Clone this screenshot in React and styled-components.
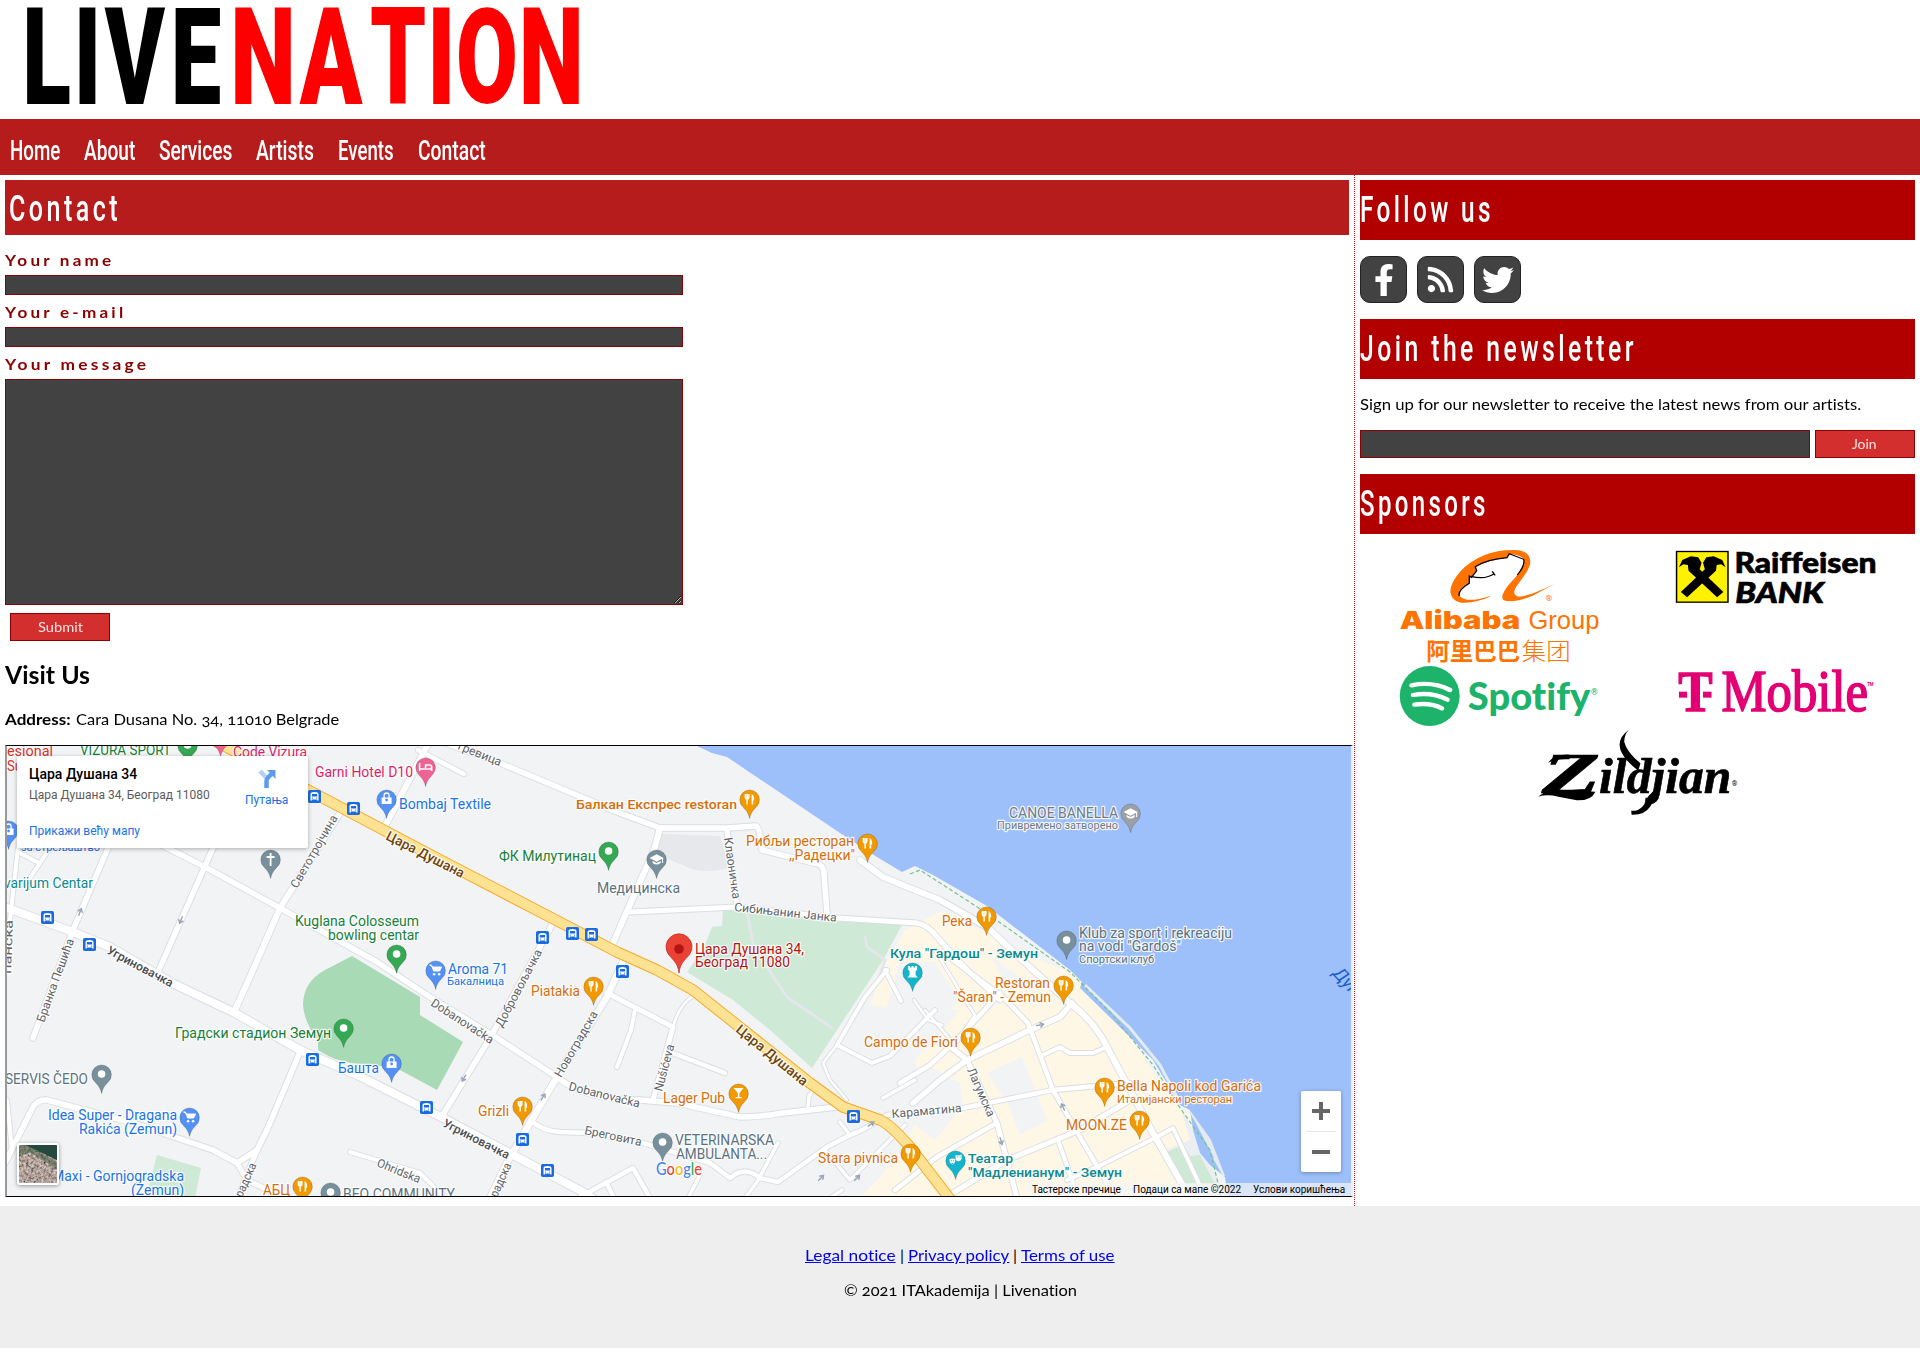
import React, { useLayoutEffect, useRef, useState } from "react";
import styled, { createGlobalStyle } from "styled-components";
import { FaFacebookF, FaRss, FaTwitter } from "react-icons/fa";

const Global = createGlobalStyle`
  * { box-sizing: border-box; }
  body { margin: 0; background: #fff; color: #000; font-family: Lato, "Open Sans", sans-serif; font-size: 16px; line-height: 20px; font-variant-ligatures: none; }
  h1, h2, h3, p { margin: 0; }
`;

/* Text squeezed or widened to a given set width */
const FitBox = styled.span`
  display: inline-block;
  white-space: nowrap;
  vertical-align: top;
  width: ${(p) => p.$w}px;
`;
const FitInner = styled.span`
  display: inline-block;
  transform-origin: 0 0;
  text-decoration: inherit;
`;
function Fit({ w, children }) {
  const ref = useRef(null);
  const [k, setK] = useState(1);
  useLayoutEffect(() => {
    setK(w / ref.current.offsetWidth);
  }, [w]);
  return (
    <FitBox $w={w}>
      <FitInner ref={ref} style={{ transform: `scaleX(${k})` }}>{children}</FitInner>
    </FitBox>
  );
}

const Header = styled.header`height: 119px;`;
const Nav = styled.nav`
  height: 56px;
  padding: 16px 0 0 10px;
  display: flex;
  gap: 24px;
  background: #b71c1c;
`;
const NavLink = styled.a`
  color: #fff;
  text-decoration: none;
  font: 500 27px/32px Roboto, sans-serif;
`;
const Columns = styled.div`display: flex; height: 1031px;`;
const Main = styled.main`width: 1354px; padding: 5px 0 0 5px;`;
const Aside = styled.aside`
  flex: 1;
  border-left: 1px dotted #b71c1c;
  padding: 5px 5px 0;
`;
const PageTitle = styled.h1`
  width: 1344px;
  height: 55px;
  padding: 8px 0 0 4px;
  background: #b71c1c;
  color: #fff;
  font: 500 36px/42px Roboto, sans-serif;
  letter-spacing: 5px;
`;
const SideTitle = styled.h2`
  height: 60px;
  padding-top: 9px;
  background: #b20000;
  color: #fff;
  font: 500 36px/42px Roboto, sans-serif;
  letter-spacing: 5px;
`;
const Form = styled.form`width: 678px; margin-top: 8px;`;
const Field = styled.label`
  display: block;
  padding-top: 7px;
  color: #8b0000;
  font-weight: 700;
  letter-spacing: 3px;
`;
const FieldName = styled.span`display: block; height: 25px;`;
const control = `
  display: block;
  width: 100%;
  margin: 0;
  padding: 1px 2px;
  background: #424242;
  border: 1px solid #8b0000;
  border-radius: 0;
  outline: 0;
`;
const Input = styled.input`${control} height: ${(p) => p.$h}px;`;
const TextArea = styled.textarea`${control} height: 226px;`;
const Button = styled.button`
  width: 100px;
  height: 28px;
  padding: 0 3px 0 0;
  margin: ${(p) => p.$m || "0"};
  display: block;
  flex: none;
  background: #d32f2f;
  border: 1px solid #8b0000;
  color: #fbe4e4;
  font: 400 13.33px/16px Lato, sans-serif;
`;
const Visit = styled.h3`margin-top: 20px; font-size: 24px; line-height: 28px; font-weight: 700;`;
const Address = styled.p`
  margin: 20px 0 16px;
  display: flex;
  gap: 5px;
  font-variant-numeric: oldstyle-nums;
`;

const Socials = styled.div`display: flex; gap: 10px; margin: 16px 0;`;
const Social = styled.a`
  width: 47px;
  height: 47px;
  border-radius: 10px;
  border: 1px solid #222;
  background: #424242;
  color: #fff;
  display: flex;
  align-items: center;
  justify-content: center;
  svg { width: ${(p) => p.$w}px; height: ${(p) => p.$h}px; }
`;
const Lead = styled.p`margin-top: 15px; height: 36px;`;
const Join = styled.div`display: flex; gap: 5px; margin-bottom: 16px;`;
const Sponsors = styled.div`
  display: flex;
  flex-wrap: wrap;
  justify-content: space-around;
  align-items: flex-start;
  row-gap: 4px;
  padding-top: 16px;
`;
const SponsorLogo = styled.svg`display: block; width: 200px; overflow: visible; margin-top: ${(p) => p.$t || 0}px;`;

const Footer = styled.footer`
  height: 142px;
  padding-top: 39px;
  background: #eee;
  display: flex;
  flex-direction: column;
  align-items: center;
  gap: 15px;
  font-variant-numeric: oldstyle-nums;
`;
const FooterLinks = styled.p`
  display: flex;
  gap: 4px;
  a { color: #0000ee; }
  a span span { text-decoration: underline; }
`;

/* ---------- Map ---------- */
const MapFrame = styled.div`
  position: relative;
  width: 1348px;
  height: 452px;
  border: solid;
  border-width: 1px 2px;
  border-color: #000 #eee #000 #999;
  overflow: hidden;
  font-family: Roboto, sans-serif;
`;
const MapSvg = styled.svg`display: block;`;
const InfoCard = styled.div`
  position: absolute;
  left: 10px;
  top: 10px;
  width: 291px;
  height: 92px;
  padding: 8px 20px 0 12px;
  display: flex;
  justify-content: space-between;
  background: #fff;
  border-radius: 2px;
  box-shadow: 0 1px 4px rgba(0, 0, 0, 0.3);
  font-size: 12px;
  line-height: 16px;
`;
const InfoTitle = styled.div`font-size: 14px; font-weight: 500; line-height: 20px; height: 23px;`;
const InfoText = styled.div`color: #5b5b5b; height: 36px;`;
const InfoLink = styled.div`color: #1a73e8;`;
const Route = styled.div`
  display: flex;
  flex-direction: column;
  align-items: center;
  padding-top: 5px;
  gap: 3px;
  color: #1a73e8;
`;
const Zoomer = styled.div`
  position: absolute;
  left: 1294px;
  top: 345px;
  width: 40px;
  height: 81px;
  background: #fff;
  border-radius: 2px;
  box-shadow: 0 1px 4px rgba(0, 0, 0, 0.3);
  display: grid;
  grid-template-rows: 40px 1px 40px;
  justify-items: center;
  align-items: center;
`;
const Rule = styled.div`width: 30px; height: 1px; background: #e6e6e6;`;
const Satellite = styled.div`
  position: absolute;
  left: 10px;
  top: 397px;
  width: 42px;
  height: 42px;
  border: 2px solid #fff;
  border-radius: 3px;
  box-shadow: 0 1px 4px rgba(0, 0, 0, 0.4);
  overflow: hidden;
  svg { display: block; }
`;
const Credits = styled.div`
  position: absolute;
  right: 0;
  bottom: 0;
  width: 324px;
  height: 13px;
  padding: 0 6px 0 5px;
  display: flex;
  justify-content: space-between;
  background: rgba(245, 245, 245, 0.7);
  font-size: 10px;
  line-height: 13px;
`;

const roads = [
  ["M7 908L13 910L73 932L110 947L172 983L235 1013L300 1050L357 1075L443 1118L517 1157L583 1192L592 1198", 8],
  ["M140 834L205 867L280 908L377 962L430 997L497 1038L557 1077Q585 1100 640 1100L677 1103L740 1117Q760 1117 783 1113L837 1107", 5.5],
  ["M213 848L158 972", 5.5],
  ["M340 813L280 908L253 970L235 1010", 6],
  ["M108 848L73 930L33 1038", 5.5],
  ["M427 746L383 830", 6],
  ["M418 750L464 774", 4.5],
  ["M440 741L500 763L617 812L660 828L727 828L756 826Q760 828 762 850L818 864Q824 866 824 874L827 913", 5.5],
  ["M660 828L654 850L613 943", 6],
  ["M630 912L737 907L837 918L917 923Q928 925 937 937L967 970L1000 1000", 5],
  ["M727 830L737 907", 5],
  ["M860 860L883 877L910 888L940 900L987 927L1033 970L1070 1003Q1095 1022 1107 1047L1153 1133L1187 1193", 6],
  ["M553 923L490 1038L450 1103L442 1116", 5.5],
  ["M625 957L607 997L557 1077L510 1157L490 1198", 6.5],
  ["M607 993L673 1027L653 1100", 5],
  ["M673 1027Q679 1005 693 996", 2.5],
  ["M635 1010L631 1030L617 1067", 4],
  ["M670 1052L725 1073", 4.5],
  ["M530 1120Q542 1131 560 1132L590 1133L643 1143L710 1163L730 1178Q745 1165 760 1178L778 1182L827 1147L850 1135Q865 1130 887 1115L963 1108L1053 1090L1130 1083", 4.5],
  ["M778 1143L757 1182L745 1198", 3.5],
  ["M580 1197L633 1168L650 1198M606 1182L614 1198", 4.5],
  ["M887 970L865 997L837 1045L872 1063L890 1056L935 1010", 4],
  ["M837 1045L823 1063L830 1080L847 1100", 2.5],
  ["M808 1108L809 1096L813 1090M840 1122L850 1135M825 1150L850 1180L905 1125M842 1190L830 1198", 3.5],
  ["M883 1098L915 1080M688 1198L700 1175", 3.5],
  ["M885 970L901 1001", 4],
  ["M913 1103L940 1080L967 1060L1030 1030L1060 1017L1072 1003", 5.5],
  ["M900 1083L930 1065L957 1040L1000 993", 4.5],
  ["M935 950L965 1000L975 1015L955 1045L925 1010M914 1000L928 1020L942 1025", 2.5],
  ["M953 960L1003 997L1028 1023L1053 1090L1080 1137L1107 1183", 4.5],
  ["M967 1060L997 1123L1017 1198M967 1060L948 1045", 5],
  ["M1043 1055L1060 1047L1070 1053L1093 1053L1107 1047", 4],
  ["M948 1196L1007 1160L1080 1130L1130 1100", 5],
  ["M1067 1180L1097 1167L1157 1137L1173 1128L1202 1190", 4],
  ["M1058 1140L1073 1183", 4],
  ["M895 1190L937 1157L993 1125", 4.5],
  ["M4 1165L33 1107Q38 1099 47 1100L133 1123L213 1150L237 1163L257 1150L267 1130L300 1052", 5.5],
  ["M237 1163L247 1180L280 1196M257 1150L238 1198", 5],
  ["M350 1152L420 1173L442 1195", 4],
  ["M18 848L10 920M20 853L37 862M50 848L30 878M7 1100L12 1150", 4],
];
const road = "M215 741L308 790L393 835L450 865L550 917L617 952L657 970L693 990L737 1025L810 1083L843 1107L880 1120Q890 1124 910 1147L950 1199";

const C = { or: "#d56e0c", gr: "#188038", bl: "#1a73e8", gy: "#5b7280", tl: "#0b8a8f", pk: "#e01e68", rd: "#d93025", st: "#5f6368" };
/* text, x, baseline, set width, colour, size, weight, angle */
const labels = [
  ["esional", 7, 756, 46, C.rd],
  ["Su", 7, 771, 15, C.rd],
  ["VIZURA SPORT", 80, 755, 91, C.gr],
  ["Code Vizura", 233, 757, 74, C.pk],
  ["Garni Hotel D10", 315, 777, 98, C.pk],
  ["Bombaj Textile", 399, 809, 92, C.bl],
  ["за стрељаштво", 21, 851, 79, C.bl, 11],
  ["varijum Centar", 4, 888, 89, C.tl],
  ["Светотројчина", 297, 889, 82, C.st, 12, 400, -60],
  ["Kuglana Colosseum", 295, 926, 124, C.gr],
  ["bowling centar", 328, 940, 91, C.gr],
  ["Угриновачка", 106, 953, 73, "#494c50", 12, 500, 28],
  ["Бранка Пешића", 44, 1023, 88, C.st, 12, 400, -70],
  ["панска", 11, 974, 54, C.st, 12, 400, -88],
  ["Цара Душана", 385, 839, 86, "#6d4410", 13.5, 500, 27],
  ["Градски стадион Земун", 175, 1038, 156, C.gr],
  ["Башта", 338, 1073, 41, C.bl],
  ["SERVIS ČEDO", 5, 1084, 83, C.gy],
  ["Idea Super - Dragana", 48, 1120, 129, C.bl],
  ["Rakića (Zemun)", 79, 1134, 98, C.bl],
  ["Maxi - Gornjogradska", 52, 1181, 132, C.bl],
  ["(Zemun)", 131, 1195, 53, C.bl],
  ["АБЦ", 263, 1195, 27, C.or],
  ["BEO COMMUNITY", 343, 1199, 112, C.gy],
  ["Ohridska", 376, 1166, 46, C.st, 12, 400, 22],
  ["радска", 242, 1198, 36, C.st, 12, 400, -66],
  ["гревица", 457, 749, 46, C.st, 12, 400, 22],
  ["Балкан Експрес restoran", 576, 809, 161, C.or, 13.5, 500],
  ["Рибљи ресторан", 746, 846, 108, C.or],
  [",,Радецки\"", 789, 860, 66, C.or],
  ["ФК Милутинац", 499, 861, 97, C.gr],
  ["Медицинска", 597, 893, 83, C.gy],
  ["Клаоничка", 724, 838, 62, C.st, 12, 400, 82],
  ["Сибињанин Јанка", 734, 911, 103, C.st, 12, 400, 6],
  ["Цара Душана 34,", 695, 954, 109, "#b31412"],
  ["Београд 11080", 695, 967, 95, "#b31412"],
  ["Кула \"Гардош\" - Земун", 890, 958, 148, C.tl, 13.5, 500],
  ["Aroma 71", 448, 974, 60, C.bl],
  ["Бакалница", 447, 985, 57, C.bl, 11],
  ["Piatakia", 531, 996, 49, C.or],
  ["Dobanovačka", 430, 1005, 72, C.st, 12, 400, 33],
  ["Dobanovačka", 568, 1090, 73, C.st, 12, 400, 14],
  ["Добровољачка", 502, 1028, 86, C.st, 12, 400, -62],
  ["Новоградска", 561, 1078, 74, C.st, 12, 400, -60],
  ["Nušićeva", 662, 1092, 48, C.st, 12, 400, -75],
  ["Lager Pub", 663, 1103, 62, C.or],
  ["Grizli", 478, 1116, 31, C.or],
  ["VETERINARSKA", 675, 1145, 99, C.gy],
  ["AMBULANTA...", 676, 1159, 91, C.gy],
  ["Бреговита", 584, 1134, 58, C.st, 12, 400, 12],
  ["Угриновачка", 442, 1126, 73, "#494c50", 12, 500, 27],
  ["радска", 497, 1198, 36, C.st, 12, 400, -66],
  ["Stara pivnica", 818, 1163, 80, C.or],
  ["Campo de Fiori", 864, 1047, 94, C.or],
  ["Цара Душана", 735, 1031, 88, "#6d4410", 13.5, 500, 39],
  ["Караматина", 892, 1118, 70, C.st, 12, 400, -5],
  ["CANOE BANELLA", 1009, 818, 109, "#707c86"],
  ["Привремено затворено", 997, 829, 121, "#707c86", 11],
  ["Река", 942, 926, 30, C.or],
  ["Klub za sport i rekreaciju", 1079, 938, 153, C.gy],
  ["na vodi \"Gardoš\"", 1079, 951, 102, C.gy],
  ["Спортски клуб", 1079, 963, 75, C.gy, 11],
  ["Restoran", 995, 988, 55, C.or],
  ["\"Šaran\" - Zemun", 953, 1002, 98, C.or],
  ["Лагумска", 967, 1070, 52, C.st, 12, 400, 66],
  ["Bella Napoli kod Garića", 1117, 1091, 144, C.or],
  ["Италијански ресторан", 1117, 1103, 115, C.or, 11],
  ["MOON.ZE", 1066, 1130, 61, C.or],
  ["Театар", 968, 1163, 45, C.tl, 13.5, 500],
  ["\"Мадленианум\" - Земун", 968, 1177, 154, C.tl, 13.5, 500],
];
const P = { or: "#f29900", gr: "#34a853", bl: "#5491f5", gy: "#78909c", tl: "#12b5cb", pk: "#f06292", sl: "#9aa0a6" };
const pins = [
  [187, 745, "gr", "dot"], [220, 737, "pk", "dot"], [425, 767, "pk", "bed"], [386, 799, "bl", "bag"], [8, 830, "bl", "bag"],
  [270, 859, "gy", "cross"], [396, 954, "gr", "dot"], [435, 970, "bl", "cart"], [343, 1028, "gr", "dot"], [391, 1063, "bl", "bag"],
  [101, 1074, "gy", "dot"], [189, 1117, "bl", "cart"], [302, 1186, "or", "food"], [330, 1192, "gy", "dot"], [749, 799, "or", "food"],
  [867, 843, "or", "food"], [608, 851, "gr", "dot"], [656, 859, "gy", "cap"], [593, 986, "or", "food"], [522, 1106, "or", "food"],
  [738, 1093, "or", "glass"], [662, 1142, "gy", "dot"], [910, 1153, "or", "food"], [1130, 813, "sl", "cap"], [986, 916, "or", "food"],
  [1066, 940, "gy", "dot"], [912, 972, "tl", "tower"], [1063, 985, "or", "food"], [970, 1037, "or", "food"], [1104, 1087, "or", "food"],
  [1139, 1120, "or", "food"], [955, 1160, "tl", "mask"],
];
const buses = [[314, 796], [353, 808], [47, 917], [89, 944], [312, 1059], [426, 1107], [542, 937], [572, 933], [591, 934], [622, 971], [522, 1139], [547, 1170], [853, 1116]];
const arrows = [[80, 912, -68], [181, 920, 112], [464, 1078, 120], [543, 1097, -58], [871, 1124, -35], [821, 1178, -45], [857, 1178, -45], [1040, 1025, -12], [1063, 1107, -115], [1001, 1141, 75]];

const glyphs = {
  dot: <circle r="3.8" fill="#fff" />,
  bed: <path d="M-6-4V4M-6 2H6M6 4V0Q6-2 4-2H0V1" stroke="#fff" strokeWidth="1.6" fill="none" />,
  bag: <><path d="M-5-1.5H5V5H-5Z" fill="#fff" /><path d="M-2.5-1V-3.5A2.5 2.5 0 0 1 2.5-3.5V-1" stroke="#fff" strokeWidth="1.3" fill="none" /><circle cy="1" r="1.4" fill="#5491f5" /></>,
  cart: <><path d="M-6-5H-4L-2 1H4L6-3H-3Z" fill="#fff" stroke="#fff" /><circle cx="-1.5" cy="4.3" r="1.3" fill="#fff" /><circle cx="3.5" cy="4.3" r="1.3" fill="#fff" /></>,
  cross: <path d="M0-6V7M-4-2H4" stroke="#fff" strokeWidth="1.8" />,
  food: <><path d="M-4.2-5V-1.5Q-4.2 0-2.5 0V5.5M-2.5-5V0M-.8-5V-1.5Q-.8 0-2.5 0" stroke="#fff" strokeWidth="1.5" fill="none" /><path d="M2 5.5V-5Q5-3.5 4.5 1.5H3.6V5.5Z" fill="#fff" /></>,
  glass: <path d="M-5-5H5L.8 0V4H3V5.2H-3V4H-.8V0Z" fill="#fff" />,
  cap: <><path d="M-7-1L0-4.8L7-1L0 2.8Z" fill="#fff" /><path d="M-4 2V4Q0 7 4 4V2L0 4Z" fill="#fff" /><path d="M6-1V4" stroke="#fff" /></>,
  tower: <path d="M-4.5-6H-2.5V-4.5H-1V-6H1V-4.5H2.5V-6H4.5V-2L3-1V3L5 5.5H-5L-3 3V-1L-4.5-2Z" fill="#fff" />,
  mask: <><path d="M-6-1Q-3-2-.5-1V2Q-3 7-6 2Z" fill="#fff" /><path d="M0-5Q3-4 6-5.5V-1Q4 3 0 0Z" fill="#fff" /><path d="M-4.8.8H-3.8M-2.5.8H-1.5M1.5-3H2.5M4-3H5M-4.3 3.5H-2.3" stroke="#12b5cb" /></>,
};
function Pin({ x, y, color, kind }) {
  return (
    <g transform={`translate(${x + 0.6} ${y})`}>
      <path d="M0 19.5C-1.5 13-4 11-7 7.6A9.8 9.8 0 1 1 7 7.6C4 11 1.5 13 0 19.5Z" fill={color} stroke="rgba(0,0,0,.22)" strokeWidth=".8" />
      {glyphs[kind]}
    </g>
  );
}
function Bus({ x, y }) {
  return (
    <g transform={`translate(${x + 0.5} ${y + 0.5})`}>
      <rect x="-6.5" y="-6.5" width="13" height="13" rx="1.8" fill="#1a6be0" />
      <path d="M-4 4V-2.5Q-4-4.5 0-4.5T4-2.5V4H2.6V3H-2.6V4Z" fill="#fff" />
      <path d="M-2.6-2.5H2.6V0H-2.6Z" fill="#1a6be0" />
      <path d="M-2.6 1.6h1M1.6 1.6h1" stroke="#1a6be0" />
    </g>
  );
}
const googleColors = ["#4285f4", "#ea4335", "#fbbc05", "#4285f4", "#34a853", "#ea4335"];

function CityMap() {
  return (
    <MapFrame>
      <MapSvg width="1344" height="450" viewBox="7 746 1344 450" fontFamily="Roboto, sans-serif">
        <rect x="7" y="746" width="1344" height="450" fill="#f1f3f5" />
        <path d="M943 910L985 932L1040 960L1070 972L1085 985L1130 1037L1165 1090L1180 1108L1190 1115L1197 1142L1185 1155L1195 1198H860L882 1175L905 1145L925 1100L915 1060L960 1010L900 1010L870 1005L885 965L905 930Z" fill="#fef7e6" />
        <path d="M900 962H935L960 1000L925 1035L895 1050L880 1030ZM987 1073L1022 1057L1047 1120L1020 1135L1008 1103ZM900 1085L933 1068L960 1083L963 1105L935 1140L905 1118ZM990 955L1030 985L1010 990Z" fill="#f1f3f5" />
        <path d="M723 910L902 925L883 960L812 1068L770 1030L733 1000L687 972L703 950L712 927L722 926Z" fill="#cfe9d7" />
        <path d="M352 956L325 970Q303 982 303 1005Q304 1022 318 1040V1050Q340 1065 370 1064L400 1070L437 1090L463 1042L420 1015V997Z" fill="#a8dab5" />
        <path d="M157 1155L201 1168L195 1198H146Z" fill="#cfe9d7" />
        <path d="M662 834L720 836L730 868Q700 875 685 866L652 853Z" fill="#e6e8ec" />
        <path d="M1180 1105L1193 1130L1210 1163L1228 1198H1185L1165 1150L1190 1140Z" fill="#eceff1" />
        <path d="M1167 1152L1183 1145L1208 1184H1183ZM1190 1156L1200 1155L1215 1184H1206Z" fill="#cfe9d7" />
        <path d="M697 746L712 753L727 757L840 833L877 857L902 872L915 866L933 875L987 906L1070 970L1082 982L1080 988L1130 1037L1153 1060L1180 1105L1190 1110L1193 1130L1200 1153L1210 1165L1225 1177L1228 1198H1351V746Z" fill="#9dc0fa" />
        <path d="M1085 985L1130 1028L1160 1065L1180 1103" stroke="#e4ebee" strokeWidth="3" fill="none" />
        <path d="M1190 1112L1210 1140L1224 1176L1214 1158" fill="#e4ebee" stroke="#e4ebee" strokeWidth="2" />
        <path d="M747 913L753 943L767 967L787 997L832 1028M865 937L867 947L885 960L880 975" stroke="#e4e7ea" strokeWidth="3" fill="none" strokeLinecap="round" />
        <g fill="none" strokeLinejoin="round" strokeLinecap="round">
          {roads.map(([d, w], i) => <path key={i} d={d} stroke="#dadde2" strokeWidth={w + 1.8} />)}
          {roads.map(([d, w], i) => <path key={i} d={d} stroke="#fff" strokeWidth={w} />)}
          <path d={road} stroke="#f2ab2c" strokeWidth="11.5" />
          <path d={road} stroke="#fde293" strokeWidth="9.5" />
          <path d="M910 874L920 870L985 912L1070 972L1110 1012L1153 1065L1178 1105L1210 1150L1221 1196" stroke="#71c38a" strokeWidth="1.2" strokeDasharray="4 2.5" strokeLinecap="butt" />
        </g>
        {arrows.map(([x, y, a], i) => (
          <path key={i} transform={`translate(${x} ${y}) rotate(${a})`} d="M-4 0H3M0-2.5L3.5 0L0 2.5" stroke="#9aa7b8" strokeWidth="1.5" fill="none" />
        ))}
        {buses.map(([x, y], i) => <Bus key={i} x={x} y={y} />)}
        {pins.map(([x, y, c, k], i) => <Pin key={i} x={x} y={y} color={P[c]} kind={k} />)}
        {labels.map(([t, x, y, w, c, size = 14, weight = 400, a = 0], i) => (
          <text key={i} transform={`translate(${x} ${y}) rotate(${a})`} textLength={w} lengthAdjust="spacingAndGlyphs" fill={c} fontSize={size} fontWeight={weight} stroke="#fff" strokeOpacity=".85" strokeWidth="2.4" strokeLinejoin="round" paintOrder="stroke">{t}</text>
        ))}
        <text transform="translate(1332 974) rotate(47)" fontSize="18" fontStyle="italic" fill="#1a5fd0">Дунав</text>
        <path d="M679 973C678 963 673 960 668.5 954.5A13 13 0 1 1 689.5 954.5C685 960 680 963 679 973Z" fill="#ea4335" stroke="#c5221f" strokeWidth=".7" />
        <circle cx="679" cy="949" r="4.8" fill="#b31412" />
        <text x="656" y="1175" fontSize="16.5" fontFamily="Lato, sans-serif" fontWeight="500" textLength="46" lengthAdjust="spacingAndGlyphs" stroke="#fff" strokeWidth="2" paintOrder="stroke">
          {"Google".split("").map((ch, i) => <tspan key={i} fill={googleColors[i]}>{ch}</tspan>)}
        </text>
      </MapSvg>
      <InfoCard>
        <div>
          <InfoTitle><Fit w={108}>Цара Душана 34</Fit></InfoTitle>
          <InfoText><Fit w={181}>Цара Душана 34, Београд 11080</Fit></InfoText>
          <InfoLink><Fit w={111}>Прикажи већу мапу</Fit></InfoLink>
        </div>
        <Route>
          <svg width="18" height="20" viewBox="0 0 18 20">
            <path d="M2 2L9 9.5" stroke="#b3d1f7" strokeWidth="4.5" />
            <path d="M8.5 19V12Q8.5 10 10 8.5L14 4.5" stroke="#5d9cec" strokeWidth="4.5" fill="none" />
            <path d="M9 1H17.5V10Z" fill="#5d9cec" />
          </svg>
          <Fit w={43}>Путања</Fit>
        </Route>
      </InfoCard>
      <Satellite>
        <svg width="38" height="38">
          <filter id="ground" x="0" y="0" width="100%" height="100%">
            <feTurbulence type="fractalNoise" baseFrequency=".4" numOctaves="3" seed="4" />
            <feColorMatrix values="1.1 0 0 0 -.12  .9 .2 0 0 -.2  .8 0 .2 0 -.18  0 0 0 0 1" />
          </filter>
          <rect width="38" height="38" filter="url(#ground)" />
          <path d="M6 0L38 15V0Z" fill="#24493f" />
          <path d="M0 0H8L38 17V24L12 8L0 10Z" fill="#3a5a3c" opacity=".5" />
        </svg>
      </Satellite>
      <Zoomer>
        <svg width="18" height="18"><path d="M0 9H18M9 0V18" stroke="#666" strokeWidth="4" /></svg>
        <Rule />
        <svg width="18" height="18"><path d="M0 9H18" stroke="#666" strokeWidth="4" /></svg>
      </Zoomer>
      <Credits>
        <Fit w={89}>Тастерске пречице</Fit>
        <Fit w={108}>Подаци са мапе ©2022</Fit>
        <Fit w={92}>Услови коришћења</Fit>
      </Credits>
    </MapFrame>
  );
}

/* ---------- Logos ---------- */
const brand = [
  ["L", 26.5, 45, "#000"], ["I", 78.5, 18.5, "#000"], ["V", 105, 61, "#000"], ["E", 175, 46, "#000"],
  ["N", 234.5, 56.5, "#f00"], ["A", 300, 63, "#f00"], ["T", 371.5, 53.5, "#f00"], ["I", 432, 19, "#f00"], ["O", 459, 56, "#f00"], ["N", 523, 56, "#f00"],
];
/* left bearing and ink width of each capital, in ems */
const ink = { L: [0.046, 0.5], I: [0.053, 0.2], V: [0.003, 0.67], E: [0.046, 0.51], N: [0.046, 0.605], A: [0.003, 0.685], T: [0.018, 0.6], O: [0.034, 0.625] };
function Brand() {
  return (
    <svg width="600" height="119" fontFamily="Roboto, sans-serif" fontWeight="900">
      {brand.map(([ch, x, w, fill], i) => {
        const size = ch === "O" ? 131 : 135;
        const y = ch === "O" ? 102.5 : 104;
        const k = w / (ink[ch][1] * size);
        return <text key={i} fontSize={size} transform={`translate(${x - ink[ch][0] * size * k} ${y}) scale(${k} 1)`} fill={fill}>{ch}</text>;
      })}
    </svg>
  );
}
const squeeze = { lengthAdjust: "spacingAndGlyphs" };

function Alibaba() {
  return (
    <SponsorLogo height="112" viewBox="160 60 540.6 336" preserveAspectRatio="none" fill="#ff7300">
      <path d="M410 197Q365 212 345 209Q318 203 323 185Q327 174 350 160V138L354 142L370 122L368 110Q400 90 450 84L462 72Q497 77 498 92Q495 120 460 160Q430 200 443 211Q470 220 520 198L580 162Q500 205 480 199Q463 192 480 165Q512 120 515 98Q515 60 470 60Q380 60 325 125Q298 160 299 185Q303 225 355 217Q390 209 410 197Z" />
      <path d="M323 198Q318 182 350 160V138L356 142L370 122L366 110Q400 88 452 83L458 71L497 88Q502 105 480 135M354 139Q395 150 418 130M412 124L420 136" fill="none" stroke="#000" strokeWidth="3.5" />
      <text x="556" y="214" fontSize="20" textLength="18" {...squeeze} fontFamily="Roboto">®</text>
      <text x="162" y="297" fontSize="73" fontWeight="900" fontFamily="Inter, Roboto, sans-serif" textLength="326" {...squeeze}>Alibaba</text>
      <text x="510" y="297" fontSize="76" fontFamily="Liberation Sans, sans-serif" textLength="192" {...squeeze}>Group</text>
      <g fontFamily="Noto Sans CJK SC, sans-serif" fontSize="72">
        <text x="234" y="389" fontWeight="700" textLength="254" {...squeeze}>阿里巴巴</text>
        <text x="492" y="389" fontWeight="300" textLength="132" {...squeeze}>集团</text>
      </g>
    </SponsorLogo>
  );
}
function Raiffeisen() {
  return (
    <SponsorLogo height="54" viewBox="908 60 540.6 162" preserveAspectRatio="none">
      <rect x="909.5" y="64.5" width="139" height="152" fill="#fff200" stroke="#000" strokeWidth="4" />
      <path d="M921 186L986 118L981 98L990 82L1010 79L1033 90L1042 112L1030 103L1018 105L1016 122L938 202Z" />
      <path d="M1036 186L972 118L977 98L968 82L948 79L925 90L916 112L928 103L940 105L942 122L1019 202Z" />
      <g fontFamily="Lato, sans-serif" fontWeight="900">
        <text x="1066" y="128" fontSize="83" textLength="384" stroke="#000" strokeWidth="2" {...squeeze}>Raiffeisen</text>
        <text x="1068" y="218" fontSize="87" fontStyle="italic" textLength="240" stroke="#000" strokeWidth="2" {...squeeze}>BANK</text>
      </g>
    </SponsorLogo>
  );
}
function Spotify() {
  return (
    <SponsorLogo height="60" viewBox="160 408 540.6 180" preserveAspectRatio="none" fill="#1db36b">
      <ellipse cx="243" cy="498" rx="81" ry="90" />
      <path d="M194 466Q250 453 298 480M198 495Q248 485 291 509M202 524Q245 517 276 535" fill="none" stroke="#fff" strokeWidth="13" strokeLinecap="round" />
      <text x="346" y="540" fontSize="113" fontWeight="900" fontFamily="Lato, sans-serif" textLength="331" {...squeeze}>Spotify</text>
      <text x="679" y="496" fontSize="25" fontFamily="Roboto" textLength="18" {...squeeze}>®</text>
    </SponsorLogo>
  );
}
function TMobile() {
  return (
    <SponsorLogo $t={4} height="42" viewBox="908 418 540.6 126" preserveAspectRatio="none" fill="#e20074" fontFamily="Liberation Serif, serif">
      <text x="914" y="540" fontSize="174" fontWeight="700" textLength="93" stroke="#e20074" strokeWidth="4" {...squeeze}>T</text>
      <rect x="916" y="483" width="22" height="18" />
      <rect x="981" y="483" width="23" height="18" />
      <text x="1031" y="540" fontSize="176" textLength="396" stroke="#e20074" strokeWidth="5" {...squeeze}>Mobile</text>
      <text x="1425" y="466" fontSize="14" fontFamily="Roboto" fontWeight="700" textLength="17" {...squeeze}>TM</text>
    </SponsorLogo>
  );
}
function Zildjian() {
  return (
    <SponsorLogo height="86" viewBox="535 600 540.6 258" preserveAspectRatio="none">
      <text y="788" fontWeight="700" fontStyle="italic" fontFamily="Liberation Serif, serif" stroke="#000" strokeWidth="2">
        <tspan x="545" fontSize="172" textLength="158" {...squeeze}>Z</tspan>
        <tspan x="700" fontSize="150" textLength="358" {...squeeze}>ildjian</tspan>
      </text>
      <path d="M780 600Q748 625 758 660Q768 690 806 722L812 700Q774 665 768 635Q768 615 780 600Z" />
      <path d="M858 770Q852 808 838 830Q822 856 788 854L787 842Q818 846 832 800Z" />
      <path d="M562 698Q580 672 620 674V688Q585 686 562 698ZM535 800L565 778L690 785Q680 812 640 811L590 800Q560 792 535 800Z" />
      <text x="1059" y="769" fontSize="20" fontFamily="Roboto" textLength="15" {...squeeze}>®</text>
    </SponsorLogo>
  );
}

const links = [["Home", 50], ["About", 51], ["Services", 73], ["Artists", 58], ["Events", 56], ["Contact", 68]];

export default function App() {
  return (
    <>
      <Global />
      <Header><Brand /></Header>
      <Nav>
        {links.map(([t, w]) => <NavLink key={t}><Fit w={w}>{t}</Fit></NavLink>)}
      </Nav>
      <Columns>
        <Main>
          <PageTitle><Fit w={112}>Contact</Fit></PageTitle>
          <Form>
            <Field><FieldName><Fit w={109}>Your name</Fit></FieldName><Input $h={20} /></Field>
            <Field><FieldName><Fit w={121}>Your e-mail</Fit></FieldName><Input $h={20} /></Field>
            <Field><FieldName><Fit w={144}>Your message</Fit></FieldName><TextArea /></Field>
            <Button type="button" $m="8px 0 0 5px"><Fit w={45}>Submit</Fit></Button>
          </Form>
          <Visit><Fit w={85}>Visit Us</Fit></Visit>
          <Address>
            <b><Fit w={66}>Address:</Fit></b>
            <Fit w={263}>Cara Dusana No. 34, 11010 Belgrade</Fit>
          </Address>
          <CityMap />
        </Main>
        <Aside>
          <SideTitle><Fit w={134}>Follow us</Fit></SideTitle>
          <Socials>
            <Social $w={20} $h={32}><FaFacebookF preserveAspectRatio="none" /></Social>
            <Social $w={29} $h={29}><FaRss /></Social>
            <Social $w={32} $h={32}><FaTwitter /></Social>
          </Socials>
          <SideTitle><Fit w={277}>Join the newsletter</Fit></SideTitle>
          <Lead><Fit w={501}>Sign up for our newsletter to receive the latest news from our artists.</Fit></Lead>
          <Join>
            <Input $h={28} />
            <Button type="button"><Fit w={25}>Join</Fit></Button>
          </Join>
          <SideTitle><Fit w={129}>Sponsors</Fit></SideTitle>
          <Sponsors>
            <Alibaba />
            <Raiffeisen />
            <Spotify />
            <TMobile />
            <Zildjian />
          </Sponsors>
        </Aside>
      </Columns>
      <Footer>
        <FooterLinks>
          <a href="#legal"><Fit w={91}>Legal notice</Fit></a>
          <span>|</span>
          <a href="#privacy"><Fit w={101}>Privacy policy</Fit></a>
          <span>|</span>
          <a href="#terms"><Fit w={94}>Terms of use</Fit></a>
        </FooterLinks>
        <p><Fit w={233}>© 2021 ITAkademija | Livenation</Fit></p>
      </Footer>
    </>
  );
}
